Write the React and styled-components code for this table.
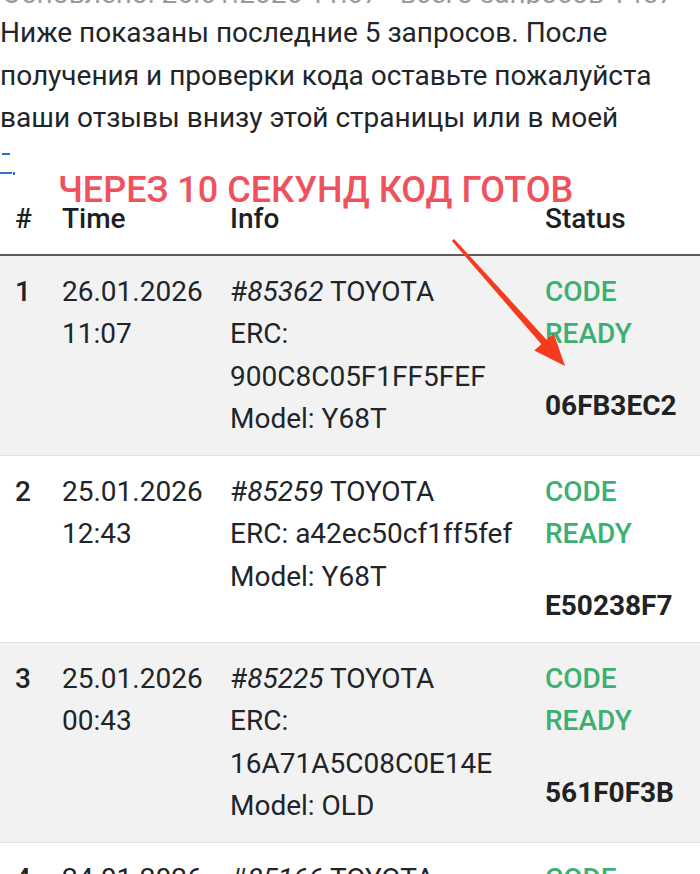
import React from 'react'
import styled, { createGlobalStyle } from 'styled-components'

const GlobalStyle = createGlobalStyle`
  html, body {
    margin: 0;
    padding: 0;
    background: #fff;
  }
  body {
    font-family: Roboto, "Noto Sans", Arial, sans-serif;
    color: #212529;
  }
`

const Page = styled.div`
  position: relative;
  width: 700px;
  height: 874px;
  overflow: hidden;
  background: #fff;
  font-size: 28px;
  line-height: 42.5px;
`

const TopCut = styled.div`
  height: 4px;
  overflow: hidden;
  clip-path: inset(0);
  padding-left: 2px;
  color: #9a9a9a;
`

const TopCutText = styled.span`
  display: block;
  line-height: 8px;
  margin-top: -10px;
  white-space: nowrap;
`

const Intro = styled.p`
  margin: 8px 0 0;
  padding-right: 6px;
`

const LinkLine = styled.div`
  height: 43px;
  display: flex;
  align-items: center;
`

const Table = styled.div`
  display: flex;
  flex-direction: column;
`

const Row = styled.div`
  display: grid;
  grid-template-columns: 47px 168px 315px 170px;
  padding: ${({ $head }) => ($head ? '15px 0 14px' : '14.5px 0 14.5px')};
  background: ${({ $striped }) => ($striped ? '#f2f2f2' : '#fff')};
  border-bottom: ${({ $head }) => ($head ? '2px solid #5c5c5c' : '1px solid #dee2e6')};
`

const Cell = styled.div`
  padding-left: 15px;
  padding-right: ${({ $pr }) => $pr || 0}px;
  font-weight: ${({ $bold }) => ($bold ? 500 : 400)};
`

const HeadCell = styled(Cell)`
  font-weight: 500;
  color: #1c1f23;
`

const Num = styled.i`
  font-style: italic;
`

const Status = styled.div`
  color: #3daf72;
  font-weight: 500;
`

const Code = styled.div`
  margin-top: 29.5px;
  font-weight: 700;
  color: #222;
`

const Note = styled.div`
  position: absolute;
  left: 58px;
  top: 172px;
  font-size: 36px;
  line-height: 36px;
  font-weight: 500;
  color: #ef525c;
  white-space: nowrap;
`

const Arrow = styled.svg`
  position: absolute;
  left: 440px;
  top: 225px;
  width: 140px;
  height: 150px;
`

const rows = [
  { n: 1, date: '26.01.2026', time: '11:07', id: '85362', erc: '900C8C05F1FF5FEF', model: 'Y68T', code: '06FB3EC2' },
  { n: 2, date: '25.01.2026', time: '12:43', id: '85259', erc: 'a42ec50cf1ff5fef', model: 'Y68T', code: 'E50238F7' },
  { n: 3, date: '25.01.2026', time: '00:43', id: '85225', erc: '16A71A5C08C0E14E', model: 'OLD', code: '561F0F3B' },
  { n: 4, date: '24.01.2026', time: '21:16', id: '85166', erc: '5F8A2C01D3EE41B7', model: 'Y68T', code: '3A7C19D0' },
]

export default function App() {
  return (
    <>
      <GlobalStyle />
      <Page>
        <TopCut>
          <TopCutText>Обновлено: 26.01.2026 11:07 · всего запросов 1457</TopCutText>
        </TopCut>
        <Intro>
          Ниже показаны последние 5 запросов. После получения и проверки кода оставьте пожалуйста ваши отзывы внизу этой страницы или в моей
        </Intro>
        <LinkLine>
          <svg width="16" height="40" viewBox="0 0 16 40">
            <rect x="2" y="12" width="8" height="2" fill="#2f6fd0" />
            <rect x="0" y="31" width="12" height="2" fill="#2f6fd0" />
            <rect x="13" y="31" width="2" height="3" fill="#2f6fd0" />
          </svg>
        </LinkLine>
        <Table>
          <Row $head>
            <HeadCell>#</HeadCell>
            <HeadCell>Time</HeadCell>
            <HeadCell>Info</HeadCell>
            <HeadCell>Status</HeadCell>
          </Row>
          {rows.map((r) => (
            <Row key={r.n} $striped={r.n % 2 === 1}>
              <Cell $bold>{r.n}</Cell>
              <Cell $pr={4}>{r.date} {r.time}</Cell>
              <Cell $pr={10}>
                #<Num>{r.id}</Num> TOYOTA
                <br />
                ERC: {r.erc}
                <br />
                Model: {r.model}
              </Cell>
              <Cell $pr={12}>
                <Status>CODE READY</Status>
                <Code>{r.code}</Code>
              </Cell>
            </Row>
          ))}
        </Table>
        <Note>ЧЕРЕЗ 10 СЕКУНД КОД ГОТОВ</Note>
        <Arrow viewBox="0 0 140 150">
          <polygon
            points="14.1,14 106.6,114.7 113.7,108.4 125,141 94.3,125.6 101.4,119.3 11.9,16"
            fill="#f43b1d"
          />
        </Arrow>
      </Page>
    </>
  )
}
